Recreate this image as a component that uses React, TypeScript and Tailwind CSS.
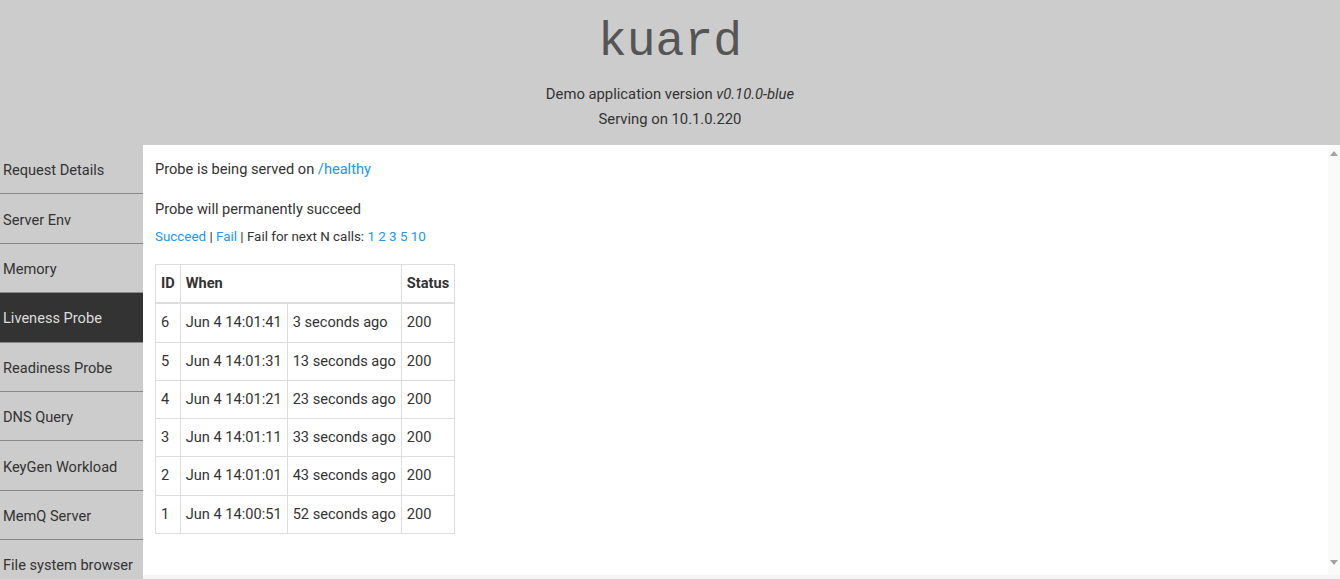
const navItems = [
  "Request Details",
  "Server Env",
  "Memory",
  "Liveness Probe",
  "Readiness Probe",
  "DNS Query",
  "KeyGen Workload",
  "MemQ Server",
  "File system browser",
];

const probes = [
  { id: 6, when: "Jun 4 14:01:41", ago: "3 seconds ago", status: 200 },
  { id: 5, when: "Jun 4 14:01:31", ago: "13 seconds ago", status: 200 },
  { id: 4, when: "Jun 4 14:01:21", ago: "23 seconds ago", status: 200 },
  { id: 3, when: "Jun 4 14:01:11", ago: "33 seconds ago", status: 200 },
  { id: 2, when: "Jun 4 14:01:01", ago: "43 seconds ago", status: 200 },
  { id: 1, when: "Jun 4 14:00:51", ago: "52 seconds ago", status: 200 },
];

const cell = "border border-[#ddd] px-[5px] py-[9px] leading-[19.3px] text-left";

export default function App() {
  return (
    <div className="flex h-[579px] w-[1340px] flex-col overflow-hidden bg-white font-['Roboto',sans-serif] text-[14.6px] text-[#333]">
      <header className="flex h-[145px] shrink-0 flex-col items-center bg-[#ccc] pt-[13px]">
        <h1 className="font-['Liberation_Mono','Courier_New',monospace] text-[48px] leading-[58px] text-[#555]">
          kuard
        </h1>
        <p className="mt-[11px] text-[14.8px] leading-[25px]">
          Demo application version <em>v0.10.0-blue</em>
        </p>
        <p className="text-[14.8px] leading-[25px]">Serving on 10.1.0.220</p>
      </header>

      <div className="flex min-h-0 flex-1">
        <nav className="w-[143px] shrink-0 bg-[#ccc]">
          {navItems.map((item) => (
            <div
              key={item}
              className={
                item === "Liveness Probe"
                  ? "flex h-[49.4px] shrink-0 items-center border-b border-[#888] bg-[#333] pl-[3px] pt-[4px] text-[#ddd]"
                  : "flex h-[49.4px] shrink-0 items-center border-b border-[#888] pl-[3px] pt-[4px]"
              }
            >
              {item}
            </div>
          ))}
        </nav>

        <div className="flex min-w-0 flex-1 flex-col">
          <div className="flex min-h-0 flex-1">
            <main className="flex-1 px-[12px] pt-[14px]">
              <p className="leading-[20px]">
                Probe is being served on{" "}
                <a className="text-[#2196f3]">/healthy</a>
              </p>
              <p className="mt-[20px] leading-[20px]">Probe will permanently succeed</p>
              <p className="mt-[10px] text-[13.4px] leading-[16px]">
                <a className="text-[#2196f3]">Succeed</a> |{" "}
                <a className="text-[#2196f3]">Fail</a> | Fail for next N calls:{" "}
                <a className="text-[#2196f3]">1</a> <a className="text-[#2196f3]">2</a>{" "}
                <a className="text-[#2196f3]">3</a> <a className="text-[#2196f3]">5</a>{" "}
                <a className="text-[#2196f3]">10</a>
              </p>

              <table className="mt-[19px] border-collapse">
                <thead>
                  <tr className="border-b-2 border-[#ddd]">
                    <th className={cell + " font-bold"}>ID</th>
                    <th className={cell + " font-bold"} colSpan={2}>
                      When
                    </th>
                    <th className={cell + " font-bold"}>Status</th>
                  </tr>
                </thead>
                <tbody>
                  {probes.map((p) => (
                    <tr key={p.id}>
                      <td className={cell}>{p.id}</td>
                      <td className={cell}>{p.when}</td>
                      <td className={cell}>{p.ago}</td>
                      <td className={cell}>{p.status}</td>
                    </tr>
                  ))}
                </tbody>
              </table>
            </main>

            <div className="flex w-[12px] shrink-0 flex-col items-center justify-between bg-[#fafafa] pb-[10px] pt-[6px]">
              <div className="h-0 w-0 border-x-[4px] border-b-[5px] border-x-transparent border-b-[#a3a3a3]" />
              <div className="h-0 w-0 border-x-[4px] border-t-[5px] border-x-transparent border-t-[#a3a3a3]" />
            </div>
          </div>
          <div className="h-[4px] shrink-0 bg-[#f5f5f5]" />
        </div>
      </div>
    </div>
  );
}
